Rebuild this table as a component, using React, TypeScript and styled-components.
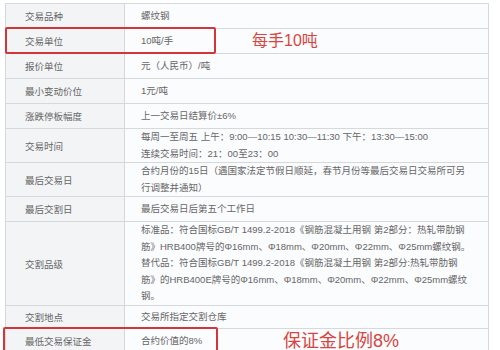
import * as React from "react";
import styled, { createGlobalStyle } from "styled-components";

const GlobalStyle = createGlobalStyle`
  html, body {
    margin: 0;
    padding: 0;
    background: #ffffff;
  }
  body {
    font-family: "Liberation Sans", "Noto Sans CJK SC", sans-serif;
  }
`;

const Page = styled.div`
  position: relative;
  width: 500px;
  height: 350px;
  overflow: hidden;
  padding: 3px 0 0 5px;
  box-sizing: border-box;
`;

const Table = styled.div`
  width: 484px;
  border-top: 1px solid #d7d8da;
  border-left: 1px solid #d7d8da;
  box-sizing: border-box;
`;

const Row = styled.div<{ $h: number }>`
  display: grid;
  grid-template-columns: 119px 1fr;
  height: ${(p) => p.$h}px;
  box-sizing: border-box;
  border-bottom: 1px solid #d7d8da;
`;

const Label = styled.div`
  display: flex;
  align-items: center;
  padding-left: 19px;
  background: #f3f4f6;
  border-right: 1px solid #d7d8da;
  color: #666;
  font-size: 9.5px;
  white-space: nowrap;
`;

const Value = styled.div<{ $noteAt?: number }>`
  display: grid;
  grid-template-columns: ${(p) => (p.$noteAt ? `${p.$noteAt}px auto` : "1fr")};
  align-items: center;
  padding-left: 16px;
  background: #fbfcfe;
  border-right: 1px solid #d7d8da;
  overflow: hidden;
`;

const Lines = styled.div`
  color: #666;
  font-size: 9.5px;
  line-height: 16.6px;
  white-space: nowrap;
`;

const Line = styled.span`
  display: block;
`;

const Note = styled.span<{ $size: number }>`
  font-size: ${(p) => p.$size}px;
  line-height: 1;
  color: #d8453f;
  white-space: nowrap;
`;

const RedBox = styled.div<{ $top: number; $left: number; $w: number; $h: number }>`
  position: absolute;
  top: ${(p) => p.$top}px;
  left: ${(p) => p.$left}px;
  width: ${(p) => p.$w}px;
  height: ${(p) => p.$h}px;
  border: 2px solid #d3363a;
  border-radius: 2px;
  box-sizing: border-box;
  pointer-events: none;
`;

type RowData = {
  label: string;
  lines: string[];
  h: number;
  note?: { text: string; at: number; size: number };
};

const rows: RowData[] = [
  { label: "交易品种", lines: ["螺纹钢"], h: 25 },
  {
    label: "交易单位",
    lines: ["10吨/手"],
    h: 25,
    note: { text: "每手10吨", at: 111, size: 16 },
  },
  { label: "报价单位", lines: ["元（人民币）/吨"], h: 25 },
  { label: "最小变动价位", lines: ["1元/吨"], h: 25 },
  { label: "涨跌停板幅度", lines: ["上一交易日结算价±6%"], h: 25 },
  {
    label: "交易时间",
    lines: [
      "每周一至周五 上午：9:00—10:15 10:30—11:30 下午：13:30—15:00",
      "连续交易时间：21：00至23：00",
    ],
    h: 34,
  },
  {
    label: "最后交易日",
    lines: [
      "合约月份的15日（遇国家法定节假日顺延，春节月份等最后交易日交易所可另",
      "行调整并通知）",
    ],
    h: 34,
  },
  { label: "最后交割日", lines: ["最后交易日后第五个工作日"], h: 25 },
  {
    label: "交割品级",
    lines: [
      "标准品：符合国标GB/T 1499.2-2018《钢筋混凝土用钢 第2部分：热轧带肋钢",
      "筋》HRB400牌号的Φ16mm、Φ18mm、Φ20mm、Φ22mm、Φ25mm螺纹钢。",
      "替代品：符合国标GB/T 1499.2-2018《钢筋混凝土用钢 第2部分:热轧带肋钢",
      "筋》的HRB400E牌号的Φ16mm、Φ18mm、Φ20mm、Φ22mm、Φ25mm螺纹",
      "钢。",
    ],
    h: 84,
  },
  { label: "交割地点", lines: ["交易所指定交割仓库"], h: 23 },
  {
    label: "最低交易保证金",
    lines: ["合约价值的8%"],
    h: 25,
    note: { text: "保证金比例8%", at: 142, size: 18 },
  },
];

export default function App() {
  return (
    <>
      <GlobalStyle />
      <Page>
        <Table>
          {rows.map((r) => (
            <Row key={r.label} $h={r.h}>
              <Label>{r.label}</Label>
              <Value $noteAt={r.note?.at}>
                <Lines>
                  {r.lines.map((l, i) => (
                    <Line key={i}>{l}</Line>
                  ))}
                </Lines>
                {r.note ? <Note $size={r.note.size}>{r.note.text}</Note> : null}
              </Value>
            </Row>
          ))}
        </Table>
        <RedBox $top={27} $left={5} $w={211} $h={27} />
        <RedBox $top={327} $left={3} $w={215} $h={30} />
      </Page>
    </>
  );
}
